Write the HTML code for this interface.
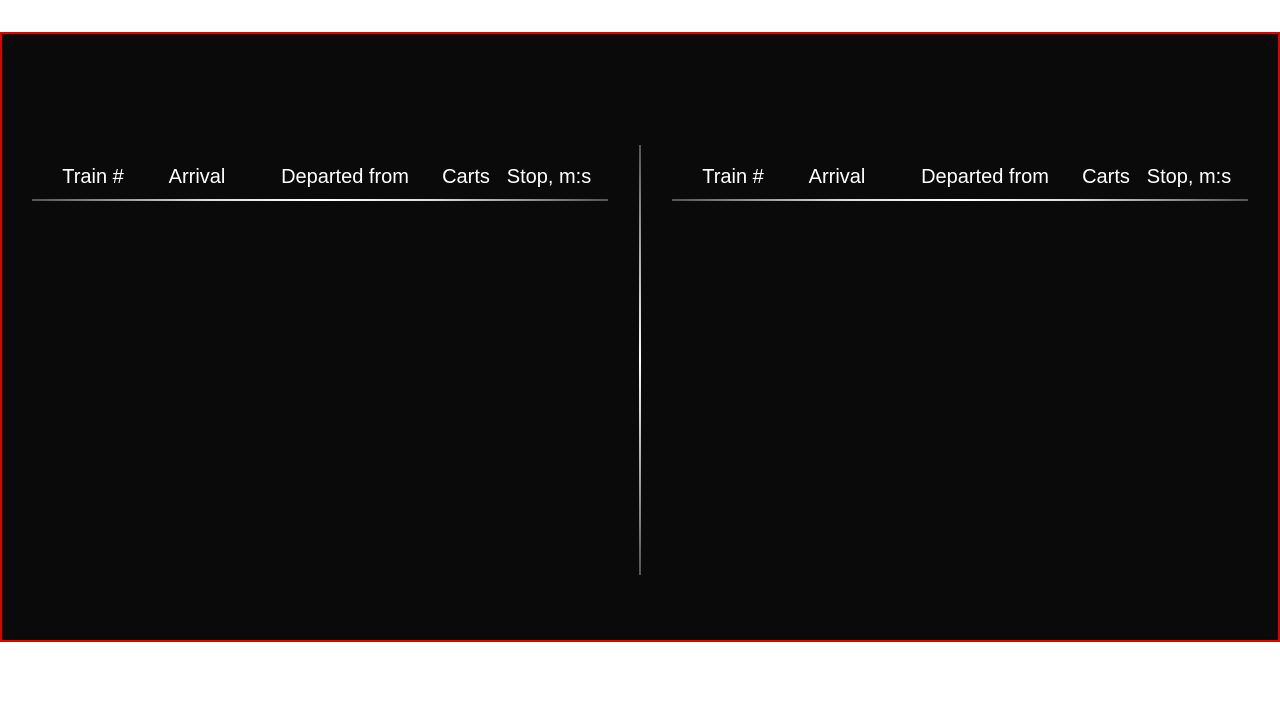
<!DOCTYPE html>
<html><head><style>
body{margin:0;width:1280px;height:720px;background:#fff;position:relative;overflow:hidden;font-family:"Liberation Sans",Arial,sans-serif}
.frame{position:absolute;left:0;top:32px;width:1276px;height:606px;border:2px solid #e00000;background:#0a0a0a}
.t{position:absolute;top:166px;color:#fff;font-size:20px;white-space:nowrap;transform:translateX(-50%)}
.h{position:absolute;top:199px;height:2px;width:576px;background:linear-gradient(90deg,#555,#ddd 30%,#fff 50%,#ddd 70%,#555)}
.v{position:absolute;left:639px;top:145px;width:2px;height:430px;background:linear-gradient(180deg,#555,#fff 50%,#555)}
</style></head><body>
<div class="frame"></div>
<div class="t" style="left:93px">Train #</div>
<div class="t" style="left:197px">Arrival</div>
<div class="t" style="left:345px">Departed from</div>
<div class="t" style="left:466px">Carts</div>
<div class="t" style="left:549px">Stop, m:s</div>
<div class="h" style="left:32px"></div>
<div class="t" style="left:733px">Train #</div>
<div class="t" style="left:837px">Arrival</div>
<div class="t" style="left:985px">Departed from</div>
<div class="t" style="left:1106px">Carts</div>
<div class="t" style="left:1189px">Stop, m:s</div>
<div class="h" style="left:672px"></div>
<div class="v"></div>
</body></html>
